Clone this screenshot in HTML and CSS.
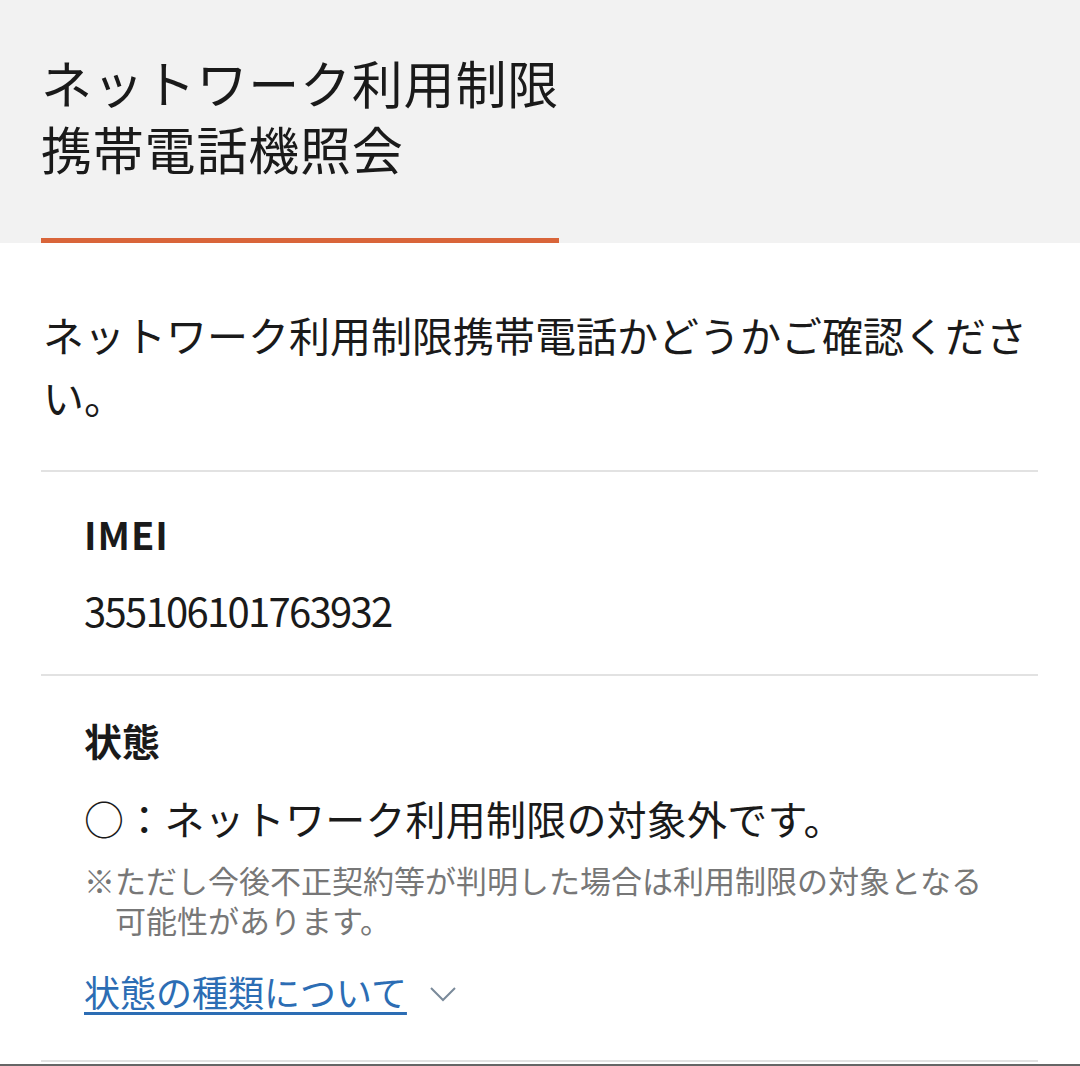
FILE: index.html
```html
<!DOCTYPE html>
<html lang="ja">
<head>
    <meta charset="UTF-8">
    <meta name="viewport" content="width=device-width, initial-scale=1.0">
    <title>ネットワーク利用制限携帯電話機照会</title>
    <link rel="stylesheet" href="styles.css">
</head>
<body>
    <header class="header">
        <div class="header-inner">
            <h1 class="title">ネットワーク利用制限<br>携帯電話機照会</h1>
        </div>
    </header>

    <main class="content">
        <p class="lead">ネットワーク利用制限携帯電話かどうかご確認ください。</p>

        <section class="item item-imei">
            <h2 class="label">IMEI</h2>
            <p class="value number">355106101763932</p>
        </section>

        <section class="item item-status">
            <h2 class="label">状態</h2>
            <p class="value status">○：ネットワーク利用制限の対象外です。</p>
            <p class="note">※ただし今後不正契約等が判明した場合は利用制限の対象となる可能性があります。</p>
            <p class="more">
                <a href="#" class="more-link">状態の種類について</a>
                <svg class="chevron" width="28" height="16" viewBox="0 0 28 16">
                    <path d="M2 2 L14 14 L26 2" fill="none" stroke="#7a8a9a" stroke-width="2"/>
                </svg>
            </p>
        </section>
    </main>
    <div class="bottom-bar"></div>
</body>
</html>
```

FILE: styles.css
```css
* {
    margin: 0;
    padding: 0;
    box-sizing: border-box;
}

body {
    font-family: "Noto Sans CJK JP", "Noto Sans", sans-serif;
    color: #1a1a1a;
    background-color: #fff;
}

.header {
    background-color: #f2f2f2;
    padding: 0 41px;
    height: 243px;
    display: flex;
    align-items: flex-end;
}

.header-inner {
    padding-bottom: 57px;
    border-bottom: 5px solid #d9653a;
}

.title {
    font-size: 51px;
    font-weight: 400;
    line-height: 66px;
    letter-spacing: 0.8px;
}

.content {
    padding: 0 42px 0 41px;
}

.lead {
    font-size: 41px;
    line-height: 62px;
    padding: 60px 0 43px 2px;
    border-bottom: 2px solid #e2e2e2;
}

.item {
    padding-left: 43px;
    border-bottom: 2px solid #e2e2e2;
}

.item-imei {
    padding-top: 37px;
    padding-bottom: 39px;
}

.item-status {
    padding-top: 39px;
    padding-bottom: 44px;
}

.label {
    font-size: 38px;
    font-weight: 700;
    line-height: 50px;
}

.item-imei .label {
    letter-spacing: 1px;
}

.value {
    margin-top: 26px;
    font-size: 40px;
    line-height: 50px;
}

.number {
    font-size: 40px;
    letter-spacing: -1.7px;
}

.status {
    margin-top: 25px;
    line-height: 56px;
    letter-spacing: 0.2px;
}

.note {
    margin-top: 14px;
    font-size: 31px;
    line-height: 40px;
    color: #777;
    padding-left: 1em;
    text-indent: -1em;
    width: 915px;
}

.more {
    margin-top: 26px;
    line-height: 50px;
    display: flex;
    align-items: center;
    gap: 22px;
}

.more-link {
    font-size: 36px;
    color: #2c6db4;
    text-decoration: underline;
    text-underline-offset: 5px;
    text-decoration-thickness: 3px;
}

.chevron {
    margin-top: 6px;
}

.bottom-bar {
    height: 2px;
    margin-top: 2px;
    background-color: #666;
}
```
